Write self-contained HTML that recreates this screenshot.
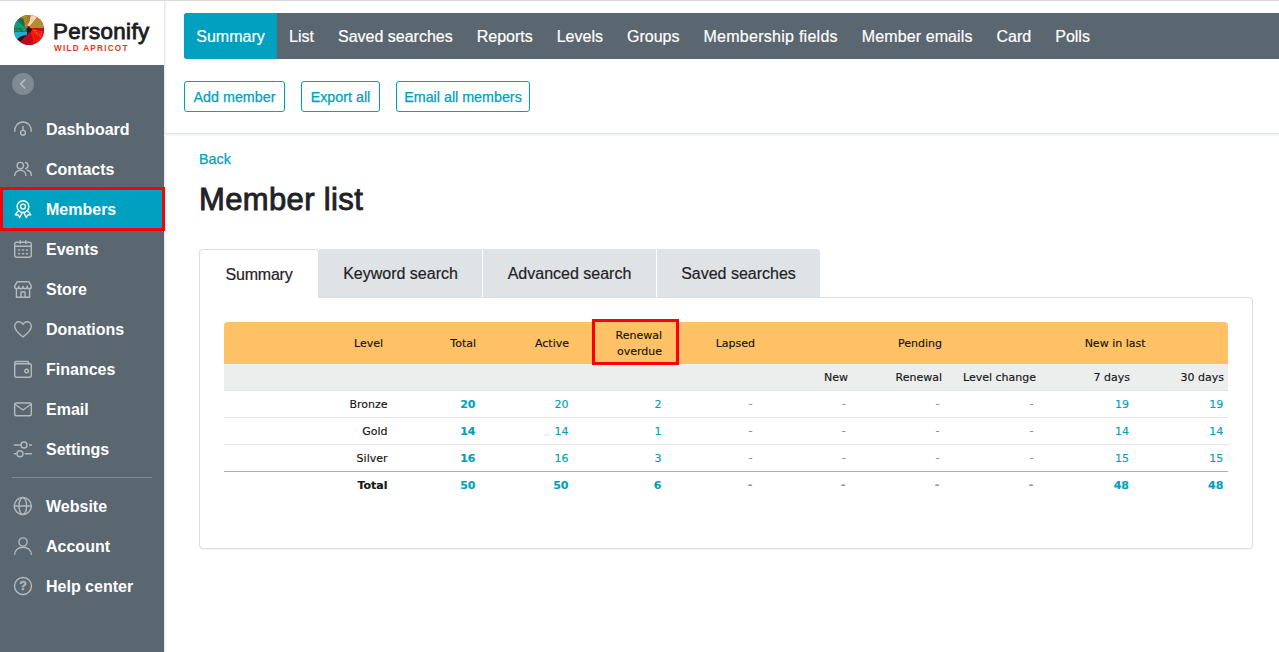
<!DOCTYPE html>
<html lang="en">
<head>
<meta charset="utf-8">
<title>Member list</title>
<style>
*{box-sizing:border-box;margin:0;padding:0}
html,body{width:1279px;height:652px;overflow:hidden;background:#fff}
body{position:relative;font-family:"Liberation Sans",Arial,sans-serif;color:#1f2326}
.abs{position:absolute}
#topline{left:0;top:0;width:1279px;height:1px;background:#d9dade}
#sidebar{left:0;top:65px;width:164px;height:587px;background:#5a6771}
#sideshadow{left:164px;top:1px;width:3px;height:651px;background:linear-gradient(90deg,#e3e5e8,#f6f7f8 60%,#fff)}
#logo{left:0;top:1px;width:164px;height:64px;background:#fff}
#logo svg{position:absolute;left:12px;top:12px;width:34px;height:34px}
#brand{left:53px;top:19px;font-size:22.3px;line-height:26px;letter-spacing:.4px;color:#1b1d21;-webkit-text-stroke:.85px #1b1d21;white-space:nowrap}
#brand2{left:54px;top:44.200px;font-size:8.2px;line-height:10px;letter-spacing:1.25px;font-weight:bold;color:#e23a17;white-space:nowrap}
.nav{position:absolute;left:0;width:164px;height:40px;color:#fff;font-weight:bold;font-size:16px;line-height:40px;white-space:nowrap}
.nav span{position:absolute;left:46px;top:1px}
.nav svg{position:absolute;left:12px;top:9px;width:22px;height:22px;fill:none;stroke:#b3babf;stroke-width:1.4;stroke-linecap:round;stroke-linejoin:round}
.nav.on{background:#00a0c0}
.nav.on svg{stroke:#fff}
#redbox1{left:0;top:187px;width:165px;height:44px;border:3px solid #fb0007}
#collapse{left:12px;top:73px;width:22px;height:22px;border-radius:50%;background:#7f8a92}
#collapse svg{position:absolute;left:0;top:0;width:22px;height:22px;fill:none;stroke:#b2babf;stroke-width:1.7;stroke-linecap:round;stroke-linejoin:round}
#divider{left:12px;top:477px;width:140px;height:1px;background:#7f8a92}
#topnav{left:184px;top:13px;width:1095px;height:46px;background:#5a6771;border-radius:3px 0 0 3px;color:#fff;font-size:16px;line-height:48px;white-space:nowrap;overflow:hidden}
#topnav span{-webkit-text-stroke:.2px;display:inline-block;padding:0 12px;height:46px;vertical-align:top}
#topnav .act{background:#00a0c0;border-radius:3px 0 0 3px;padding:0 12.3px}
.btn{position:absolute;top:81px;height:31px;border:1px solid #00a0c0;border-radius:3px;color:#00a0c0;-webkit-text-stroke:.25px;font-size:14.3px;line-height:31px;text-align:center;white-space:nowrap;background:#fff}
#hr1{left:164px;top:133px;width:1115px;height:1px;background:#e2e5e7}
#hr2{left:164px;top:134px;width:1115px;height:2px;background:linear-gradient(#eef0f1,#fafbfb)}
#back{-webkit-text-stroke:.25px;left:199px;top:150px;font-size:14.3px;line-height:18px;color:#00a0c0}
#h1{left:199px;top:179px;font-size:31px;line-height:42px;font-weight:normal;color:#1f2326;-webkit-text-stroke:0.9px #1f2326;white-space:nowrap;letter-spacing:.36px}
.tab{-webkit-text-stroke:.2px;position:absolute;top:249px;height:48px;background:#dfe3e6;font-size:16px;line-height:50px;text-align:center;color:#1f2326;white-space:nowrap}
#panel{left:199px;top:297px;width:1054px;height:252px;border:1px solid #dcdfe2;border-radius:0 4px 4px 4px;background:#fff;box-shadow:0 1px 2px rgba(0,0,0,.06)}
#tab1{-webkit-text-stroke:.2px;letter-spacing:-.2px;left:199px;top:249px;width:120px;height:49px;background:#fff;border:1px solid #dcdfe2;border-bottom:none;border-radius:4px 4px 0 0;font-size:16px;line-height:50px;text-align:center;position:absolute}
#thead{left:224px;top:322px;width:1004px;height:42px;background:#ffc165;border-radius:4px 4px 0 0}
#tsub{left:224px;top:364px;width:1004px;height:27px;background:#eceeee;border-top:1px solid #eef1f4;border-bottom:1px solid #e0e3e4}
.c{position:absolute;white-space:nowrap;line-height:14px;font-family:"DejaVu Sans",Verdana,sans-serif;font-size:11px;color:#151515;-webkit-text-stroke:.15px}
.lnk{color:#009fc1}
.b{font-weight:bold}
.dash{color:#87929a}
.rowline{position:absolute;left:224px;width:1004px;height:1px;background:#e4e4e4}
#redbox2{left:592px;top:319px;width:87px;height:46px;border:3px solid #fb0007}
</style>
</head>
<body>
<div id="topline" class="abs"></div>
<div id="logo" class="abs">
<svg viewBox="0 0 652 652">
<defs><clipPath id="lc"><circle cx="326" cy="325" r="289"/></clipPath></defs>
<g clip-path="url(#lc)">
<rect x="0" y="0" width="652" height="652" fill="#b8101f"/>
<path d="M120 20L380 20L365 40L335 160L290 225L300 282L240 278L235 180L210 105L135 80Z" fill="#b1882c"/>
<path d="M365 20L480 60L475 92L345 252L300 246L290 225L335 160Z" fill="#f8d3a6"/>
<path d="M475 92L640 60L640 287L350 287L335 258Z" fill="#b38f2f"/>
<path d="M380 287L640 287L640 356L500 332Z" fill="#b8101c"/>
<path d="M350 300L380 287L500 332L640 356L640 640L425 640L355 355Z" fill="#f91607"/>
<path d="M355 355L425 640L240 640L170 545L300 400Z" fill="#bd0a1c"/>
<path d="M275 310L322 268L382 310L376 346L300 400L170 545L85 510L180 440L270 420L290 380Z" fill="#1b1e20"/>
<path d="M20 365L290 365L285 415L180 440L85 510L30 440Z" fill="#1ab0d2"/>
<path d="M20 300L160 285L215 350L272 365L20 365Z" fill="#0e7c4b"/>
<path d="M90 130L282 300L272 365L215 350L160 285L20 300L30 200Z" fill="#0c9c82"/>
<path d="M90 130L135 80L210 105L235 180L240 278L282 300Z" fill="#11793f"/>
<g fill="#7b5c22"><circle cx="325" cy="62" r="11"/><circle cx="300" cy="85" r="10"/><circle cx="335" cy="100" r="10"/><circle cx="305" cy="125" r="11"/><circle cx="335" cy="140" r="9"/><circle cx="290" cy="160" r="10"/><circle cx="312" cy="185" r="10"/><circle cx="288" cy="212" r="9"/><circle cx="215" cy="100" r="8"/><circle cx="262" cy="110" r="8"/></g>
<g fill="#f3b98a"><circle cx="420" cy="335" r="9"/><circle cx="452" cy="330" r="9"/><circle cx="440" cy="362" r="9"/><circle cx="472" cy="377" r="9"/><circle cx="492" cy="402" r="9"/><circle cx="460" cy="397" r="8"/><circle cx="522" cy="422" r="9"/><circle cx="552" cy="405" r="9"/><circle cx="546" cy="446" r="9"/><circle cx="566" cy="385" r="8"/></g>
<g fill="#c50d16"><circle cx="440" cy="450" r="10"/><circle cx="472" cy="470" r="10"/><circle cx="450" cy="500" r="10"/><circle cx="430" cy="530" r="10"/><circle cx="442" cy="562" r="10"/><circle cx="502" cy="482" r="10"/><circle cx="410" cy="575" r="9"/></g>
<g fill="#3a2a2c"><circle cx="335" cy="470" r="10"/><circle cx="315" cy="506" r="10"/><circle cx="335" cy="545" r="10"/><circle cx="296" cy="566" r="10"/></g>
<g fill="#55b874"><circle cx="100" cy="312" r="11"/><circle cx="66" cy="336" r="10"/><circle cx="146" cy="336" r="10"/><circle cx="120" cy="340" r="8"/></g>
<g fill="#fbe6c8"><circle cx="410" cy="85" r="9"/><circle cx="440" cy="100" r="8"/><circle cx="412" cy="122" r="8"/></g>
</g>
</svg>
</div>
<div id="brand" class="abs">Personify</div>
<div id="brand2" class="abs">WILD APRICOT</div>
<div id="sidebar" class="abs"></div>
<div id="sideshadow" class="abs"></div>
<div id="collapse" class="abs"><svg viewBox="0 0 22 22"><path d="M12.800 6.800L8.500 10.900L12.800 15"/></svg></div>
<div class="nav" style="top:109px"><svg viewBox="0 0 22 22"><path d="M2.800 13.400A8.270 8.270 0 1 1 19.200 13.400"/><circle cx="11" cy="14.800" r="2.400"/><path d="M11 8.400v4"/></svg><span>Dashboard</span></div>
<div class="nav" style="top:149px"><svg viewBox="0 0 22 22"><circle cx="8.3" cy="7.6" r="3.2"/><path d="M2.7 17.4c0-3 2.4-5.2 5.6-5.2s5.600 2.200 5.600 5.200"/><path d="M13.600 4.500a3.200 3.200 0 0 1 0 6.200"/><path d="M15.200 12.200c2.500 0.300 4.200 2.400 4.200 5.200"/></svg><span>Contacts</span></div>
<div class="nav on" style="top:189px"><svg viewBox="0 0 22 22"><circle cx="11" cy="8.600" r="5.900"/><circle cx="11" cy="8.600" r="2.500"/><path d="M6.400 12.600l-3.200 4.200l3 0.200l1.500 2.500l2.500-5"/><path d="M15.600 12.600l3.200 4.200l-3 0.200l-1.500 2.500l-2.500-5"/></svg><span>Members</span></div>
<div class="nav" style="top:229px"><svg viewBox="0 0 22 22"><rect x="2.700" y="4.300" width="16.600" height="15" rx="2"/><path d="M2.700 8.200h16.600M8.200 2.600v3M13.800 2.600v3"/><path d="M6.500 12h1M10.500 12h1M14.500 12h1M6.500 15.700h1M10.500 15.700h1M14.500 15.700h1" stroke-width="1.600"/></svg><span>Events</span></div>
<div class="nav" style="top:269px"><svg viewBox="0 0 22 22"><path d="M5.200 3.700h11.600l2.600 4.600c0 1.600-1 2.500-2.100 2.500s-2.100-0.900-2.100-2.500c0 1.600-1 2.500-2.100 2.500s-2.100-0.900-2.100-2.500c0 1.600-1 2.500-2.100 2.500s-2.100-0.900-2.100-2.500c0 1.600-1 2.500-2.100 2.500s-2.100-0.900-2.100-2.500z"/><path d="M4.400 11v8.300h13.200v-8.300"/><path d="M9 19.300v-5.300h4v5.300"/></svg><span>Store</span></div>
<div class="nav" style="top:309px"><svg viewBox="0 0 22 22"><path d="M11 19c-3.500-2.700-8.300-6.300-8.300-10.700c0-2.600 2-4.500 4.300-4.500c1.700 0 3.100 0.900 4 2.500c0.900-1.600 2.300-2.500 4-2.500c2.300 0 4.300 1.900 4.300 4.500c0 4.400-4.800 8-8.300 10.700z"/></svg><span>Donations</span></div>
<div class="nav" style="top:349px"><svg viewBox="0 0 22 22"><rect x="2.700" y="5.800" width="16.600" height="13.500" rx="1.500"/><path d="M2.700 7v-2.200a1.300 1.300 0 0 1 1.300-1.300h11.300a1.300 1.300 0 0 1 1.300 1.300v1"/><circle cx="14.600" cy="13" r="1.800"/></svg><span>Finances</span></div>
<div class="nav" style="top:389px"><svg viewBox="0 0 22 22"><rect x="2.700" y="5" width="16.600" height="12.800" rx="1.500"/><path d="M2.900 6.300l8.100 5.700l8.100-5.700"/></svg><span>Email</span></div>
<div class="nav" style="top:429px"><svg viewBox="0 0 22 22"><path d="M2.300 7h6.300M17.600 7h1.900"/><circle cx="12" cy="7" r="3"/><path d="M2.300 15.700h1.700M13.200 15.700h6.300"/><circle cx="8" cy="15.700" r="3"/></svg><span>Settings</span></div>
<div class="nav" style="top:486px"><svg viewBox="0 0 22 22"><circle cx="10.800" cy="11" r="8.500"/><ellipse cx="10.800" cy="11" rx="3.800" ry="8.500"/><path d="M2.300 11h17"/></svg><span>Website</span></div>
<div class="nav" style="top:526px"><svg viewBox="0 0 22 22"><circle cx="11" cy="7" r="4.100"/><path d="M2.700 19.300c0-4.200 3.600-7 8.300-7s8.300 2.800 8.300 7"/></svg><span>Account</span></div>
<div class="nav" style="top:566px"><svg viewBox="0 0 22 22"><circle cx="11" cy="11" r="8.500"/><text x="11" y="15.300" text-anchor="middle" font-size="12.500" font-family="Liberation Sans,sans-serif" stroke="#b3babf" stroke-width=".3" fill="#b3babf" font-weight="bold">?</text></svg><span>Help center</span></div>

<div id="redbox1" class="abs"></div>
<div id="divider" class="abs"></div>
<div id="topnav" class="abs"><span class="act">Summary</span><span>List</span><span>Saved searches</span><span>Reports</span><span>Levels</span><span>Groups</span><span style="letter-spacing:.27px">Membership fields</span><span style="letter-spacing:.1px">Member emails</span><span>Card</span><span>Polls</span></div>
<div class="btn" style="left:184px;width:101px">Add member</div>
<div class="btn" style="left:301px;width:79px">Export all</div>
<div class="btn" style="left:396px;width:134px">Email all members</div>
<div id="hr1" class="abs"></div><div id="hr2" class="abs"></div>
<div id="back" class="abs">Back</div>
<div id="h1" class="abs">Member list</div>
<div id="panel" class="abs"></div>
<div id="tab1">Summary</div>
<div class="tab" style="left:319px;width:163px">Keyword search</div>
<div class="tab" style="left:483px;width:173px">Advanced search</div>
<div class="tab" style="left:657px;width:163px;border-radius:0 4px 0 0">Saved searches</div>
<div id="thead" class="abs"></div>
<div id="tsub" class="abs"></div>
<div class="rowline" style="top:417px"></div>
<div class="rowline" style="top:444px"></div>
<div class="rowline" style="top:471px;background:#a9afb0"></div>
<div class="c " style="right:896.0px;top:337.2px">Level</div>
<div class="c " style="right:803.0px;top:337.2px">Total</div>
<div class="c " style="right:710.0px;top:337.2px">Active</div>
<div class="c " style="right:617.0px;top:329.2px">Renewal</div>
<div class="c " style="right:617.0px;top:344.7px">overdue</div>
<div class="c " style="right:524.0px;top:337.2px">Lapsed</div>
<div class="c " style="right:337.0px;top:337.2px">Pending</div>
<div class="c " style="right:133.5px;top:337.2px">New in last</div>
<div class="c " style="right:431.0px;top:371.2px">New</div>
<div class="c " style="right:337.0px;top:371.2px">Renewal</div>
<div class="c " style="right:243.0px;top:371.2px">Level change</div>
<div class="c " style="right:149.0px;top:371.2px">7 days</div>
<div class="c " style="right:55.0px;top:371.2px">30 days</div>
<div class="c " style="right:891.5px;top:398.2px">Bronze</div>
<div class="c lnk b" style="right:803.5px;top:398.2px">20</div>
<div class="c lnk" style="right:710.5px;top:398.2px">20</div>
<div class="c lnk" style="right:617.5px;top:398.2px">2</div>
<div class="c dash" style="right:526.6px;top:397.2px">-</div>
<div class="c dash" style="right:433.4px;top:397.2px">-</div>
<div class="c dash" style="right:339.6px;top:397.2px">-</div>
<div class="c dash" style="right:245.6px;top:397.2px">-</div>
<div class="c lnk" style="right:150.0px;top:398.2px">19</div>
<div class="c lnk" style="right:55.7px;top:398.2px">19</div>
<div class="c " style="right:891.5px;top:425.2px">Gold</div>
<div class="c lnk b" style="right:803.5px;top:425.2px">14</div>
<div class="c lnk" style="right:710.5px;top:425.2px">14</div>
<div class="c lnk" style="right:617.5px;top:425.2px">1</div>
<div class="c dash" style="right:526.6px;top:424.2px">-</div>
<div class="c dash" style="right:433.4px;top:424.2px">-</div>
<div class="c dash" style="right:339.6px;top:424.2px">-</div>
<div class="c dash" style="right:245.6px;top:424.2px">-</div>
<div class="c lnk" style="right:150.0px;top:425.2px">14</div>
<div class="c lnk" style="right:55.7px;top:425.2px">14</div>
<div class="c " style="right:891.5px;top:452.2px">Silver</div>
<div class="c lnk b" style="right:803.5px;top:452.2px">16</div>
<div class="c lnk" style="right:710.5px;top:452.2px">16</div>
<div class="c lnk" style="right:617.5px;top:452.2px">3</div>
<div class="c dash" style="right:526.6px;top:451.2px">-</div>
<div class="c dash" style="right:433.4px;top:451.2px">-</div>
<div class="c dash" style="right:339.6px;top:451.2px">-</div>
<div class="c dash" style="right:245.6px;top:451.2px">-</div>
<div class="c lnk" style="right:150.0px;top:452.2px">15</div>
<div class="c lnk" style="right:55.7px;top:452.2px">15</div>
<div class="c b" style="right:891.5px;top:479.2px">Total</div>
<div class="c lnk b" style="right:803.5px;top:479.2px">50</div>
<div class="c lnk b" style="right:710.5px;top:479.2px">50</div>
<div class="c lnk b" style="right:617.5px;top:479.2px">6</div>
<div class="c dash b" style="right:526.6px;top:478.2px">-</div>
<div class="c dash b" style="right:433.4px;top:478.2px">-</div>
<div class="c dash b" style="right:339.6px;top:478.2px">-</div>
<div class="c dash b" style="right:245.6px;top:478.2px">-</div>
<div class="c lnk b" style="right:150.0px;top:479.2px">48</div>
<div class="c lnk b" style="right:55.7px;top:479.2px">48</div>

<div id="redbox2" class="abs"></div>
</body>
</html>
